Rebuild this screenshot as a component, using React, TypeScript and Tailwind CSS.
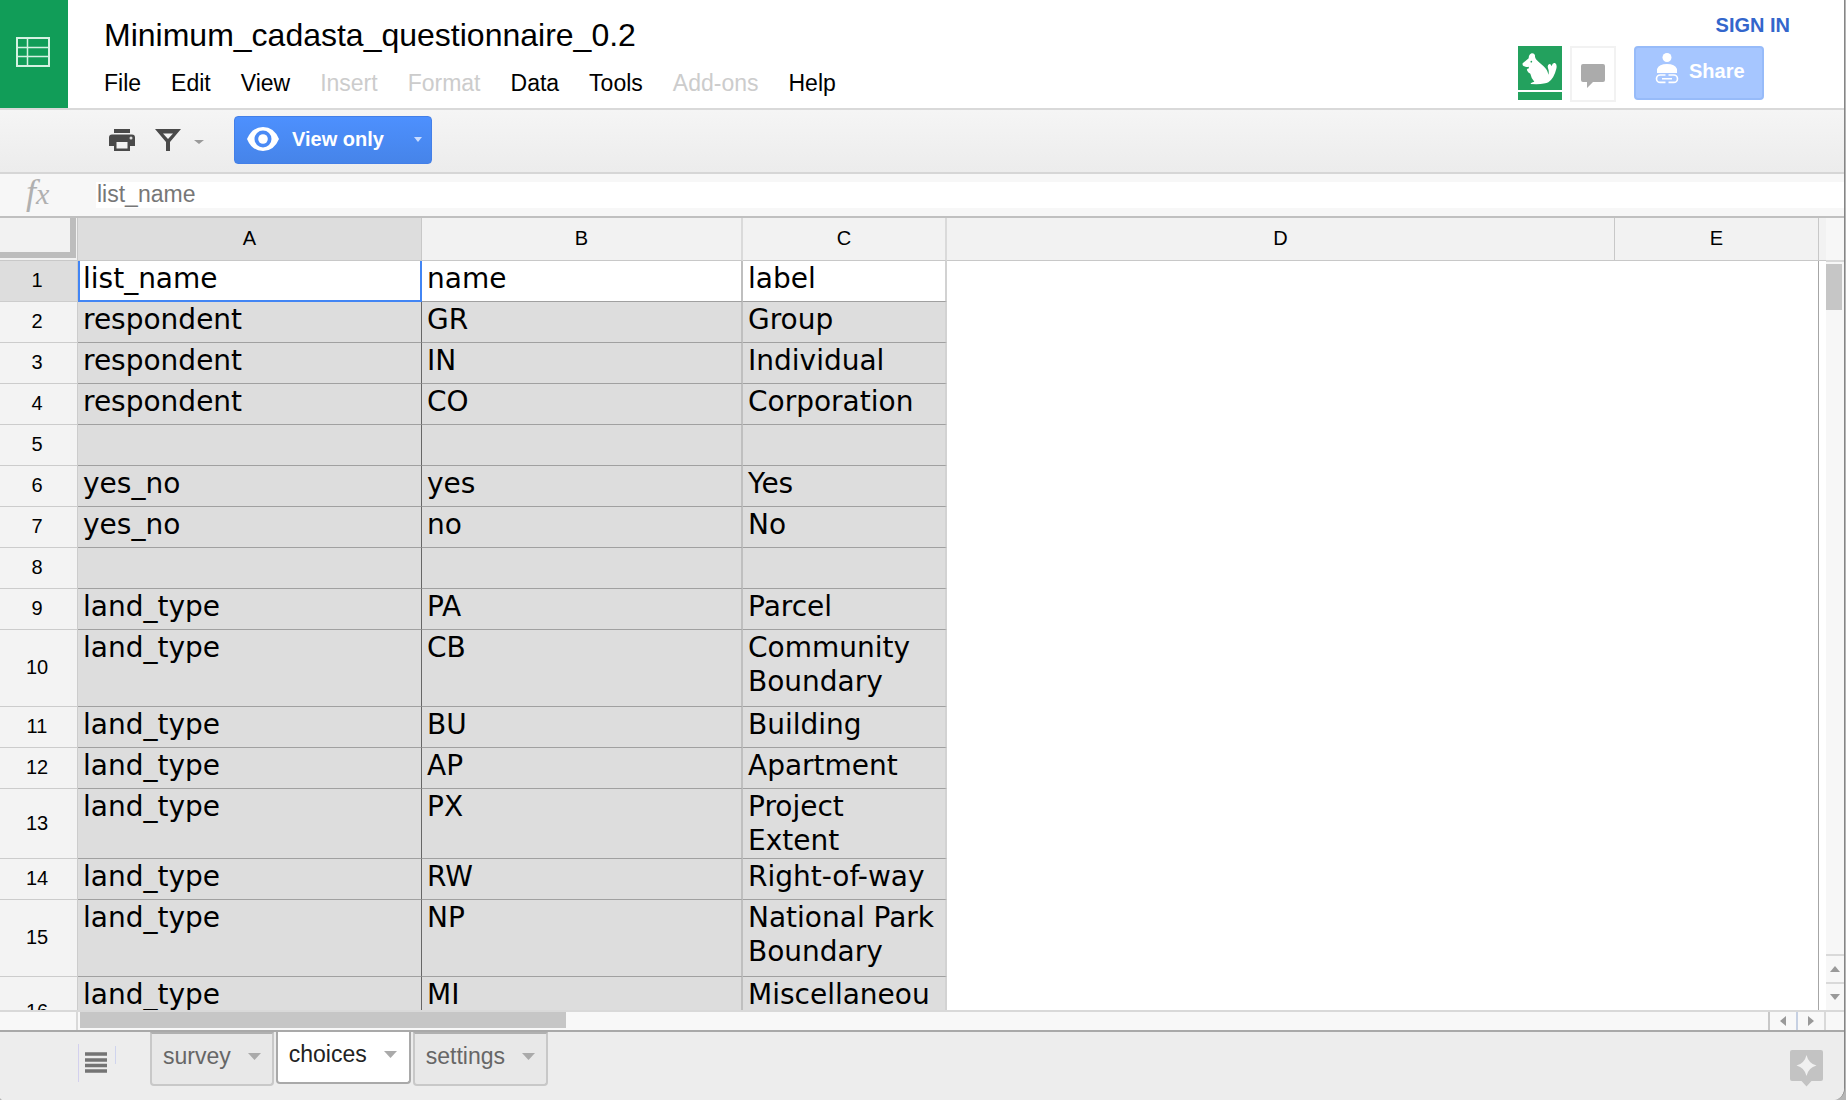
import React from "react";

type Row = { cells: [string, string, string]; height: string };

const H1 = "h-[41px]";
const H2 = "h-[77px]";
const H3 = "h-[70px]";

const rows: Row[] = [
  { cells: ["list_name", "name", "label"], height: H1 },
  { cells: ["respondent", "GR", "Group"], height: H1 },
  { cells: ["respondent", "IN", "Individual"], height: H1 },
  { cells: ["respondent", "CO", "Corporation"], height: H1 },
  { cells: ["", "", ""], height: H1 },
  { cells: ["yes_no", "yes", "Yes"], height: H1 },
  { cells: ["yes_no", "no", "No"], height: H1 },
  { cells: ["", "", ""], height: H1 },
  { cells: ["land_type", "PA", "Parcel"], height: H1 },
  { cells: ["land_type", "CB", "Community Boundary"], height: H2 },
  { cells: ["land_type", "BU", "Building"], height: H1 },
  { cells: ["land_type", "AP", "Apartment"], height: H1 },
  { cells: ["land_type", "PX", "Project Extent"], height: H3 },
  { cells: ["land_type", "RW", "Right-of-way"], height: H1 },
  { cells: ["land_type", "NP", "National Park Boundary"], height: H2 },
  { cells: ["land_type", "MI", "Miscellaneous"], height: H3 },
];

const menus = [
  { label: "File" },
  { label: "Edit" },
  { label: "View" },
  { label: "Insert", off: true },
  { label: "Format", off: true },
  { label: "Data" },
  { label: "Tools" },
  { label: "Add-ons", off: true },
  { label: "Help" },
];

function Caret({ className, dir = "down" }: { className: string; dir?: "down" | "up" | "left" | "right" }) {
  const d = { down: "M0 0H14L7 8Z", up: "M0 8H14L7 0Z", left: "M14 0V8L0 4Z", right: "M0 0V8L14 4Z" }[dir];
  return (
    <svg viewBox="0 0 14 8" preserveAspectRatio="none" fill="currentColor" className={className} aria-hidden="true">
      <path d={d} />
    </svg>
  );
}

function Header() {
  return (
    <header className="flex h-[110px] shrink-0 border-b-2 border-[#d9d9d9] bg-white">
      <a href="#home" aria-label="Sheets home" className="flex w-[68px] shrink-0 justify-center bg-[#119d58] pr-[2px] pt-[37px]">
        <svg width="34" height="30" viewBox="0 0 34 30" fill="none" stroke="#d5f2e2" aria-hidden="true">
          <path d="M1 1H33V29H1Z" strokeWidth="2" />
          <path d="M1 10.5H33M1 19.5H33M11.5 1V29" strokeWidth="1.5" />
        </svg>
      </a>
      <div className="flex min-w-0 flex-1 flex-col gap-[14px] pl-9 pt-[15px]">
        <h1 className="text-[32px] leading-10">Minimum_cadasta_questionnaire_0.2</h1>
        <nav className="flex gap-[30px] text-[23px] leading-7">
          {menus.map((m) => (
            <button key={m.label} disabled={m.off} className={m.off ? "text-[#cccccc]" : "text-black"}>
              {m.label}
            </button>
          ))}
        </nav>
      </div>
      <div className="flex shrink-0 flex-col items-end pt-3">
        <a href="#signin" className="mr-[54px] text-[20px] leading-[26px] font-bold text-[#3366cc]">
          SIGN IN
        </a>
        <div className="mr-20 mt-2 flex items-start">
          <button aria-label="Anonymous viewer" className="mr-2 flex flex-col gap-[2px]">
            <svg width="44" height="44" viewBox="114 138 132 132" className="bg-[#23a15e]" aria-hidden="true">
              <path
                fill="#fff"
                d="M128 190L146 175Q146 163 155 160Q163 159 165 166Q164 171 168 178Q176 187 190 198Q203 209 205 224Q208 214 204 205Q201 195 208 192Q213 192 215 199Q217 188 225 189Q232 192 229 206Q222 235 205 247Q194 254 152 252Q152 247 163 245Q154 236 151 221Q143 218 141 211Q139 206 147 205L146 200Q139 202 132 199Q126 196 128 190Z"
              />
              <circle cx="154" cy="185" r="2.5" fill="#23a15e" />
            </svg>
            <span className="h-2 w-11 bg-[#23a15e]" />
          </button>
          <button aria-label="Comments" className="mr-[18px] flex h-14 w-[46px] justify-center border-2 border-[#f2f2f2] pt-4">
            <svg width="24" height="24" viewBox="0 0 24 24" fill="#ababab" aria-hidden="true">
              <path d="M2 0H22Q24 0 24 2V16Q24 18 22 18H12L6 24V18H2Q0 18 0 16V2Q0 0 2 0Z" />
            </svg>
          </button>
          <button className="flex h-[54px] w-[130px] items-start rounded border-2 border-[#97bbf9] bg-[#a6c6ff] pl-[19px] pt-1 text-white">
            <svg width="24" height="32" viewBox="0 0 24 32" fill="#fff" aria-hidden="true">
              <circle cx="12" cy="5.500" r="4.500" />
              <path d="M2 21V17Q4 12 12 12Q20 12 22 17V21Z" />
              <path d="M10.500 23H5.200a3.700 3.700 0 0 0 0 7.400H10.500M13.500 23H18.800a3.700 3.700 0 0 1 0 7.400H13.500M7 26.700H17" fill="none" stroke="#fff" strokeWidth="1.600" />
            </svg>
            <span className="pl-[10px] pt-[7px] text-[20px] leading-6 font-bold">Share</span>
          </button>
        </div>
      </div>
    </header>
  );
}

function Toolbar() {
  return (
    <div className="flex h-16 shrink-0 items-start border-b-2 border-[#d6d6d6] bg-gradient-to-b from-[#f5f5f5] to-[#ececec] pl-[109px] pt-[6px]">
      <button aria-label="Print" className="mt-[13px]">
        <svg width="26" height="22" viewBox="0 0 26 22" aria-hidden="true">
          <path d="M5 0H21V4H5Z" fill="#4a4a4a" />
          <path d="M3 5.500H23Q26 5.500 26 8.500V17H21V22H5V17H0V8.500Q0 5.500 3 5.500Z" fill="#4a4a4a" />
          <path d="M7.500 13H18.500V19.500H7.500Z" fill="#f3f3f3" />
          <circle cx="22" cy="9" r="1.500" fill="#ddd" />
        </svg>
      </button>
      <button aria-label="Filter" className="ml-5 mt-[13px] flex">
        <svg width="26" height="22" viewBox="0 0 26 22" aria-hidden="true">
          <path d="M0 0H26L15 13V22H11V13Z" fill="#4a4a4a" />
          <path d="M8 4.500H18L13 10Z" fill="#f3f3f3" />
        </svg>
        <Caret className="ml-[13px] mt-[11px] h-1 w-[10px] text-[#9a9a9a]" />
      </button>
      <button className="ml-[30px] flex h-12 w-[198px] items-start rounded border border-[#437fe8] bg-gradient-to-b from-[#4d90fe] to-[#4684e9] pl-3 text-white">
        <svg width="32" height="24" viewBox="0 0 32 24" className="mt-[10px]" aria-hidden="true">
          <path d="M16 0Q27 0 32 12Q27 24 16 24Q5 24 0 12Q5 0 16 0Z" fill="#fff" />
          <circle cx="16" cy="12" r="8.500" fill="#4a8af5" />
          <circle cx="16" cy="12" r="4.800" fill="#fff" />
        </svg>
        <span className="flex-1 pl-[13px] pt-[10px] text-left text-[20px] leading-6 font-bold">View only</span>
        <Caret className="mr-[9px] mt-5 h-[5px] w-2 text-[#c9dcff]" />
      </button>
    </div>
  );
}

function FormulaBar() {
  return (
    <div className="flex h-11 shrink-0 items-center border-b-2 border-[#c0c0c0] bg-[#f7f7f7]">
      <label htmlFor="formula" className="w-24 shrink-0 pb-1 pl-[26px] font-['Liberation_Serif'] text-[36px] leading-9 text-[#b0b0b0] italic">
        f<span className="text-[30px]">x</span>
      </label>
      <input id="formula" readOnly value="list_name" className="h-[26px] min-w-0 flex-1 bg-white pb-[2px] pl-px text-[23px] leading-6 text-[#777777] outline-none" />
    </div>
  );
}

function Sheet() {
  const head = "border-b border-[#c8c8c8] pt-0 pb-[3px] text-[20px] leading-6 font-normal";
  return (
    <div className="min-w-0 flex-1 overflow-hidden bg-white">
      <table className="w-full table-fixed border-separate border-spacing-0">
        <colgroup>
          <col className="w-[78px]" />
          <col className="w-[344px]" />
          <col className="w-[321px]" />
          <col className="w-[204px]" />
          <col />
          <col className="w-[204px]" />
        </colgroup>
        <thead>
          <tr className="h-[43px] bg-[#f2f2f2]">
            <td className="border-r border-b border-[#c8c8c8] p-0 align-top">
              <div className="h-10 w-[76px] border-r-[6px] border-b-[6px] border-[#bdbdbd]" />
            </td>
            <th scope="col" className={`${head} border-r bg-[#dddddd]`}>A</th>
            <th scope="col" className={`${head} border-r-2 border-r-[#dadada]`}>B</th>
            <th scope="col" className={`${head} border-r-2 border-r-[#dadada]`}>C</th>
            <th scope="col" className={`${head} border-r`}>D</th>
            <th scope="col" className={`${head} border-r`}>E</th>
          </tr>
        </thead>
        <tbody className="font-['DejaVu_Sans'] text-[28px] leading-[34px]">
          {rows.map((row, i) => {
            const first = i === 0;
            const bg = first ? "bg-white" : "bg-[#dddddd]";
            return (
              <tr key={i} className={row.height}>
                <th
                  scope="row"
                  className={`border-r border-b border-[#cccccc] pt-0 pr-[3px] pb-[2px] pl-0 align-middle font-['Liberation_Sans'] text-[20px] leading-6 font-normal ${first ? "bg-[#dddddd]" : "bg-[#f3f3f3]"}`}
                >
                  {i + 1}
                </th>
                <td
                  className={
                    first
                      ? "border-x-2 border-b-2 border-[#4285f4] bg-white pt-px pr-0 pb-0 pl-[3px] align-top"
                      : "border-r border-b border-r-[#666666] border-b-[#a0a0a0] bg-[#dddddd] pt-px pr-0 pb-0 pl-[5px] align-top"
                  }
                >
                  {row.cells[0]}
                </td>
                <td className={`border-r-2 border-b border-r-[#bfbfbf] border-b-[#a0a0a0] pt-px pr-0 pb-0 pl-[5px] align-top ${bg}`}>{row.cells[1]}</td>
                <td className={`border-r-2 border-b border-r-[#d2d2d2] border-b-[#a0a0a0] pt-px pr-2 pb-0 pl-[5px] align-top break-words ${bg}`}>{row.cells[2]}</td>
                <td className="p-0" />
                <td className="border-r border-[#a6a6a6] p-0" />
              </tr>
            );
          })}
        </tbody>
      </table>
    </div>
  );
}

function VerticalScroll() {
  return (
    <div className="flex w-[25px] shrink-0">
      <div className="w-[7px]">
        <div className="h-[43px] border-b border-[#c8c8c8] bg-[#f2f2f2]" />
      </div>
      <div className="flex flex-1 flex-col bg-[#f7f7f7]">
        <div className="h-11 border-b-2 border-[#d9d9d9]" />
        <div className="flex-1 pt-[2px]">
          <div className="h-[46px] w-4 bg-[#c6c6c6]" />
        </div>
        <button aria-label="Scroll up" className="flex h-7 items-center justify-center border-t-2 border-[#d9d9d9]">
          <Caret dir="up" className="h-[6px] w-[10px] text-[#999999]" />
        </button>
        <button aria-label="Scroll down" className="flex h-7 items-center justify-center border-t-2 border-[#d9d9d9]">
          <Caret className="h-[6px] w-[10px] text-[#999999]" />
        </button>
      </div>
    </div>
  );
}

function HorizontalScroll() {
  return (
    <div className="flex h-[22px] shrink-0 border-t-2 border-b-2 border-t-[#d9d9d9] border-b-[#a9a9a9] bg-[#f8f8f8]">
      <div className="w-[78px] border-r-2 border-[#d9d9d9]" />
      <div className="flex-1 pl-[2px]">
        <div className="h-4 w-[486px] bg-[#c6c6c6]" />
      </div>
      <button aria-label="Scroll left" className="flex w-7 items-center justify-center border-l-2 border-[#c8c8c8]">
        <Caret dir="left" className="h-[10px] w-[6px] text-[#999999]" />
      </button>
      <button aria-label="Scroll right" className="flex w-7 items-center justify-center border-l-2 border-[#c6d0e2]">
        <Caret dir="right" className="h-[10px] w-[6px] text-[#999999]" />
      </button>
      <div className="w-5 border-l-2 border-[#d9d9d9]" />
    </div>
  );
}

function Tab({ label, active }: { label: string; active?: boolean }) {
  return (
    <button
      className={
        active
          ? "flex h-[52px] items-center gap-[17px] rounded-b border-x-2 border-b-2 border-[#a9a9a9] bg-white pr-3 pb-[6px] pl-[11px] text-[#222222]"
          : "flex h-[54px] items-center gap-[17px] rounded-b border-2 border-[#c8c8c8] border-t-[#b0b0b0] bg-[#e8e8e8] pr-[11px] pb-[6px] pl-[11px] text-[#666666]"
      }
    >
      {label}
      <Caret className="h-[7px] w-[13px] text-[#aaaaaa]" />
    </button>
  );
}

function Footer() {
  return (
    <footer className="flex h-[68px] shrink-0 items-start bg-[#ededed]">
      <button aria-label="All sheets" className="mt-3 ml-[78px] flex h-[38px] border-l border-[#d3d0ee] pt-2 pl-[6px]">
        <svg width="22" height="22" viewBox="0 0 22 22" stroke="#747474" strokeWidth="3.400" aria-hidden="true">
          <path d="M0 2H22M0 8H22M0 13.500H22M0 19H22" />
        </svg>
      </button>
      <div className="mt-[14px] mr-[34px] ml-2 h-[18px] w-px bg-[#cfd4ee]" />
      <div className="flex flex-1 items-start gap-[2px] text-[23px] leading-7">
        <Tab label="survey" />
        <Tab label="choices" active />
        <Tab label="settings" />
      </div>
      <button aria-label="Explore" className="mt-[18px] mr-[21px]">
        <svg width="33" height="37" viewBox="0 0 33 37" aria-hidden="true">
          <path d="M2 0H31Q33 0 33 2V29Q33 31 31 31H21.500L16.500 36.500L11.500 31H2Q0 31 0 29V2Q0 0 2 0Z" fill="#c3c3c3" />
          <path d="M16.500 5Q18.500 13.500 26.500 15.500Q18.500 17.500 16.500 26Q14.500 17.500 6.500 15.500Q14.500 13.500 16.500 5Z" fill="#f0f0f0" />
        </svg>
      </button>
    </footer>
  );
}

export default function App() {
  return (
    <div className="h-screen overflow-hidden bg-[#b5b5b5] pr-px font-['Liberation_Sans',sans-serif] text-black">
      <div className="flex h-full flex-col overflow-hidden rounded-br-xl rounded-bl border-r border-[#858585] bg-white">
        <Header />
        <Toolbar />
        <FormulaBar />
        <main className="flex min-h-0 flex-1">
          <Sheet />
          <VerticalScroll />
        </main>
        <HorizontalScroll />
        <Footer />
      </div>
    </div>
  );
}
